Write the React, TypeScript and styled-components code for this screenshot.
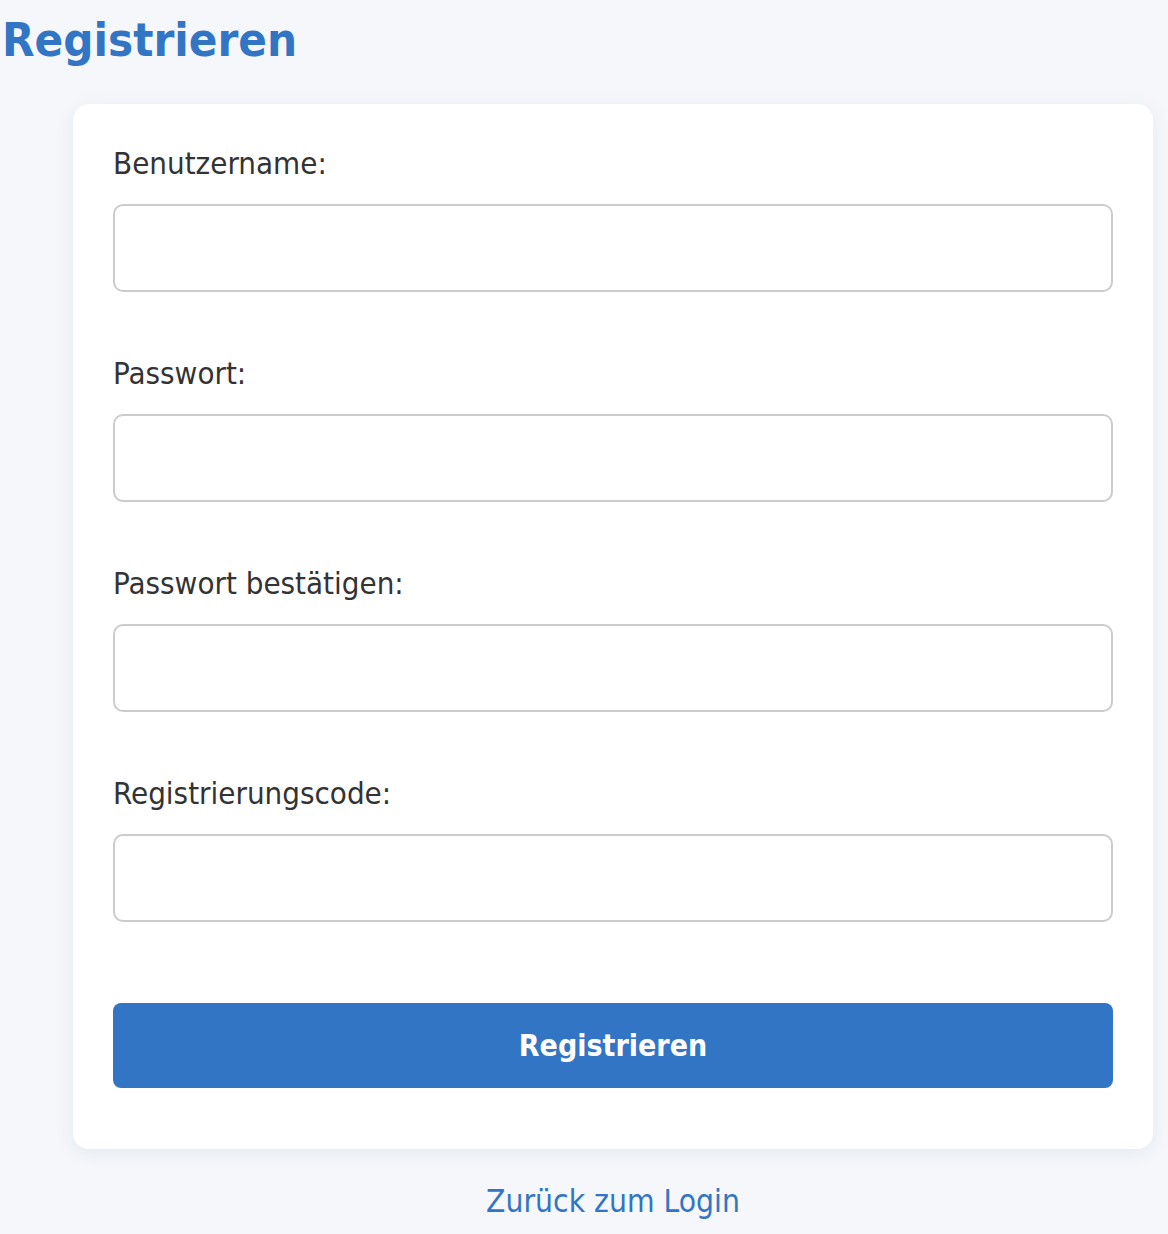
import React from "react";
import styled, { createGlobalStyle } from "styled-components";

const Global = createGlobalStyle`
  html, body { margin: 0; padding: 0; background: #f5f7fa; }
  body { font-family: "DejaVu Sans Condensed", "DejaVu Sans", sans-serif; color: #333; }
`;

const Page = styled.div`
  min-height: 1234px;
  background: #f5f7fa;
  padding-top: 1px;
`;

const Title = styled.h1`
  margin: 10px 0 0 0;
  padding-left: 2px;
  font-size: 47px;
  line-height: 57px;
  font-weight: bold;
  color: #3375c5;
`;

const Card = styled.form`
  margin: 36px 0 0 73px;
  width: 1080px;
  box-sizing: border-box;
  background: #fff;
  border-radius: 16px;
  box-shadow: 0 4px 20px rgba(40, 70, 110, 0.08);
  padding: 41px 40px 61px;
`;

const Field = styled.div`
  margin-bottom: 63px;
  &:last-of-type { margin-bottom: 81px; }
`;

const Label = styled.label`
  display: block;
  font-size: 31px;
  line-height: 36px;
  margin-bottom: 23px;
  color: #333;
`;

const Input = styled.input`
  display: block;
  width: 100%;
  height: 88px;
  box-sizing: border-box;
  border: 2px solid #ccc;
  border-radius: 10px;
  background: #fff;
  font-size: 30px;
  padding: 0 20px;
  outline: none;
`;

const Button = styled.button`
  display: block;
  width: 100%;
  height: 85px;
  border: none;
  border-radius: 8px;
  background: #3375c5;
  color: #fff;
  font-family: "DejaVu Sans Condensed", "DejaVu Sans", sans-serif;
  font-size: 30px;
  font-weight: bold;
  cursor: pointer;
`;

const Footer = styled.div`
  width: 1080px;
  margin-left: 73px;
  text-align: center;
  margin-top: 34px;
`;

const Link = styled.a`
  color: #3375c5;
  font-size: 31.5px;
  line-height: 36px;
  text-decoration: none;
`;

const fields = [
  { id: "username", label: "Benutzername:", type: "text" },
  { id: "password", label: "Passwort:", type: "password" },
  { id: "confirm", label: "Passwort bestätigen:", type: "password" },
  { id: "code", label: "Registrierungscode:", type: "text" },
];

export default function App() {
  return (
    <Page>
      <Global />
      <Title>Registrieren</Title>
      <Card onSubmit={(e) => e.preventDefault()}>
        {fields.map((f) => (
          <Field key={f.id}>
            <Label htmlFor={f.id}>{f.label}</Label>
            <Input id={f.id} type={f.type} />
          </Field>
        ))}
        <Button type="submit">Registrieren</Button>
      </Card>
      <Footer>
        <Link href="#">Zurück zum Login</Link>
      </Footer>
    </Page>
  );
}
